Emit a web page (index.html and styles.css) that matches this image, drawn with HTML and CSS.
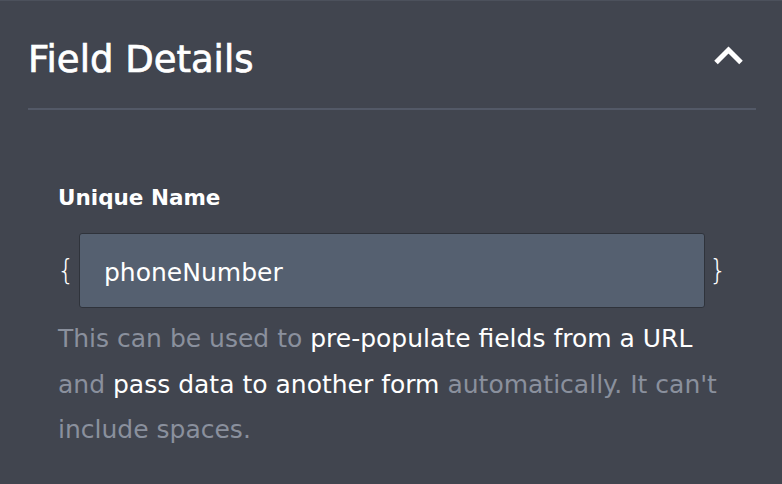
FILE: index.html
```html
<!DOCTYPE html>
<html lang="en">
<head>
<meta charset="utf-8">
<title>Field Details</title>
<link rel="stylesheet" href="styles.css">
</head>
<body>
<div class="panel">
  <div class="panel-header">
    <h2 class="panel-title">Field Details</h2>
    <svg class="chevron" width="31" height="21" viewBox="0 0 31 21" aria-hidden="true">
      <polyline points="3,17.5 15.5,5 28,17.5" fill="none" stroke="#ffffff" stroke-width="5" stroke-linejoin="miter" stroke-linecap="butt"/>
    </svg>
  </div>
  <div class="panel-body">
    <div class="field-label">Unique Name</div>
    <div class="name-row">
      <span class="brace brace-open">{</span>
      <div class="name-input">phoneNumber</div>
      <span class="brace brace-close">}</span>
    </div>
    <p class="field-help">This can be used to <span class="hl">pre-populate fields from a URL</span> and <span class="hl">pass data to another form</span> automatically. It can't include spaces.</p>
  </div>
</div>
</body>
</html>
```
FILE: styles.css
```css
html, body {
  margin: 0;
  padding: 0;
  background: #41454f;
}

body {
  font-family: "DejaVu Sans", "Liberation Sans", sans-serif;
  color: #ffffff;
}

.panel {
  width: 782px;
  height: 484px;
  box-sizing: border-box;
  border-top: 1px solid #4c515c;
  background: #41454f;
}

.panel-header {
  display: flex;
  justify-content: space-between;
  align-items: flex-start;
  margin: 0 26px 0 28px;
  padding: 37px 0 26px;
  border-bottom: 2px solid #535967;
}

.panel-title {
  margin: 0;
  font-size: 37px;
  line-height: 44px;
  font-weight: normal;
  color: #ffffff;
  -webkit-text-stroke: 0.7px #ffffff;
}

.chevron {
  display: block;
  margin-top: 7px;
  margin-right: 12px;
}

.panel-body {
  padding: 76px 58px 0 58px;
}

.field-label {
  font-size: 21.5px;
  line-height: 24px;
  font-weight: bold;
  color: #ffffff;
}

.name-row {
  display: flex;
  align-items: center;
  margin-top: 23px;
}

.brace {
  flex: none;
  font-size: 28px;
  font-weight: 200;
  color: #ffffff;
  line-height: 32px;
}

.brace-open {
  width: 21px;
  margin-left: -1px;
  margin-right: 1px;
}

.brace-close {
  width: 17px;
  padding-left: 4px;
  box-sizing: border-box;
}

.name-input {
  flex: 1;
  display: flex;
  align-items: center;
  box-sizing: border-box;
  max-width: 626px;
  height: 75px;
  padding: 4px 0 0 24px;
  border: 1px solid #2f333b;
  border-radius: 3px;
  background: #556070;
  font-size: 25px;
  color: #ffffff;
}

.field-help {
  margin: 8px 0 0;
  font-size: 25px;
  line-height: 45.5px;
  color: #8a909d;
}

.hl {
  color: #ffffff;
}
```
